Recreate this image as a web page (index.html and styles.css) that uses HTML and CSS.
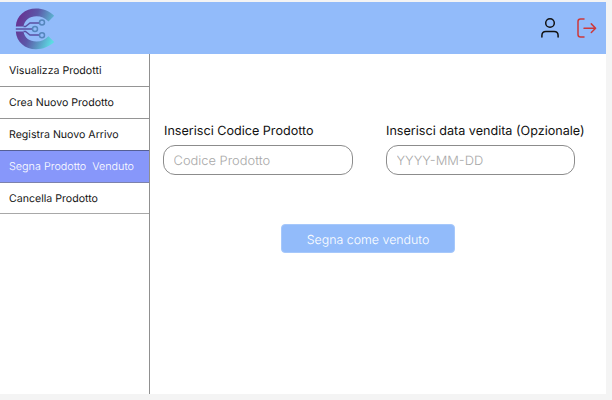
FILE: index.html
```html
<!DOCTYPE html>
<html lang="it">
<head>
<meta charset="utf-8">
<title>Segna Prodotto Venduto</title>
<link rel="stylesheet" href="styles.css">
</head>
<body>
<div class="app">
  <header class="topbar">
    <svg class="logo" viewBox="0 0 40 42" width="40" height="42">
      <defs><linearGradient id="g" gradientUnits="userSpaceOnUse" x1="3" y1="12" x2="40" y2="26"><stop offset="0" stop-color="#673493"/><stop offset=".4" stop-color="#5b57a8"/><stop offset="1" stop-color="#5cdce2"/></linearGradient></defs>
      <path fill="url(#g)" d="M.8 18.500C1.500 7.500 10 .5 21 .5c7 0 13 2.500 18.200 7.200L33.500 13.500C30 10 26 8.200 21.500 8.200 14.500 8.200 9.500 12 8.500 18.500zM.8 23.500C1.500 34 10 41.300 21 41.300c7 0 13-2.500 18.200-7.200L33.500 28.300C30 31.800 26 33.500 21.500 33.500 14.500 33.500 9.500 30 8.500 23.500z"/>
      <g fill="none" stroke="#5950a2" stroke-width="1.400"><path d="M.8 21H17.500M8.500 18.500h2L15 15h9.200M8.500 23.500h2L15 27h9.200"/></g>
      <g fill="none" stroke="#5586bd" stroke-width="1.500"><circle cx="27" cy="14.600" r="2.500"/><circle cx="20" cy="21" r="2.500"/><circle cx="27" cy="27.200" r="2.500"/></g>
    </svg>
    <div class="actions">
      <svg class="user" viewBox="0 0 20 22" width="20" height="22" fill="none" stroke="#111" stroke-width="1.500" stroke-linecap="round"><circle cx="10" cy="6" r="4.300"/><path d="M1.900 20v-1.500c0-2.500 1.500-4 4-4h8.200c2.500 0 4 1.500 4 4v1.500"/></svg>
      <svg class="exit" viewBox="0 0 22 22" width="22" height="22" fill="none" stroke="#cd393b" stroke-width="1.500" stroke-linecap="round" stroke-linejoin="round"><path d="M8 2H4.500C3 2 2 3 2 4.500v13C2 19 3 20 4.500 20H8M8 11.200h11.500M15.300 6.900l4.300 4.300-4.300 4.300"/></svg>
    </div>
  </header>
  <div class="body">
    <nav class="sidebar">
      <a class="item">Visualizza Prodotti</a>
      <a class="item">Crea Nuovo Prodotto</a>
      <a class="item before">Registra Nuovo Arrivo</a>
      <a class="item active">Segna Prodotto&nbsp; Venduto</a>
      <a class="item last">Cancella Prodotto</a>
    </nav>
    <main class="content">
      <form class="form">
        <div class="fields">
          <label class="field"><span class="label">Inserisci Codice Prodotto</span><input class="input" placeholder="Codice Prodotto"></label>
          <label class="field"><span class="label">Inserisci data vendita (Opzionale)</span><input class="input" placeholder="YYYY-MM-DD"></label>
        </div>
        <button class="submit" type="button">Segna come venduto</button>
      </form>
    </main>
  </div>
</div>
</body>
</html>
```
FILE: styles.css
```css
* { box-sizing: border-box; }
body {
  margin: 0;
  height: 400px;
  padding-top: 2px;
  background: #f4f4f4;
  font-family: Inter, sans-serif;
  text-rendering: geometricPrecision;
  overflow: hidden;
}
.app {
  width: 606px;
  height: 391.500px;
  display: flex;
  flex-direction: column;
  background: #fff;
}
.topbar {
  height: 52px;
  flex: none;
  display: flex;
  align-items: center;
  justify-content: space-between;
  padding: 0 8px 0 14.500px;
  background: #92bbfa;
}
.logo { margin-top: 2px; }
.actions { display: flex; align-items: center; gap: 16px; }
.body { flex: 1; display: flex; }
.sidebar {
  width: 150px;
  flex: none;
  border-right: 1px solid #909090;
}
.item {
  display: flex;
  align-items: center;
  height: 32px;
  padding: 0 0 0 9px;
  border-bottom: 1px solid #959595;
  font-size: 10.600px;
  color: #151515;
  white-space: nowrap;
}
.item:first-child { height: 33px; }
.before { border-bottom-color: #555f96; }
.active { background: #8797fa; color: #fff; border-bottom-color: #7d82ac; font-weight: 300; font-size: 10.800px; }
.last { height: 31px; border-bottom-color: #a8a8a8; }
.content { flex: 1; padding: 67px 0 0 13px; }
.form { display: flex; flex-direction: column; }
.fields { display: flex; gap: 33px; }
.field { width: 190px; display: flex; flex-direction: column; }
.label {
  height: 24px;
  line-height: 18px;
  padding: 2px 0 0 1px;
  font-size: 12.600px;
  color: #111;
  white-space: nowrap;
}
.field + .field .label { padding-left: 0; }
.input {
  height: 30px;
  width: 190px;
  padding: 2px 9.500px 0;
  border: 1px solid #8c8c8c;
  border-radius: 12px;
  background: #fff;
  font: 300 12.900px Inter, sans-serif;
  text-rendering: inherit;
}
.field + .field .input { width: 189px; }
.input::placeholder { color: #a8a8a8; opacity: 1; }
.submit {
  width: 174px;
  height: 29px;
  margin: 49px 0 0 118px;
  padding: 1px 0 0;
  border: 1px solid #a6c8fb;
  border-radius: 4px;
  background: #92bbfa;
  color: #fff;
  font: 300 12.400px Inter, sans-serif;
  text-rendering: inherit;
}
```
